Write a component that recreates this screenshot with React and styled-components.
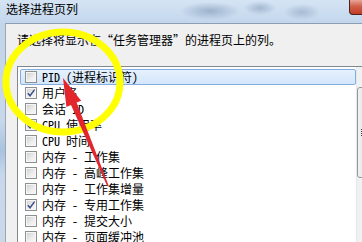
import styled, { createGlobalStyle } from "styled-components";

const GlobalStyle = createGlobalStyle`
    html, body {
        margin: 0;
        padding: 0;
        overflow: hidden;
        background: #f0f0f0;
    }
    body {
        font-family: "Noto Sans Mono CJK SC", "Noto Sans CJK SC", sans-serif;
        font-size: 12px;
    }
`

const columns = [
    { label: "PID (进程标识符)", selected: true },
    { label: "用户名", checked: true },
    { label: "会话 ID" },
    { label: "CPU 使用率", checked: true },
    { label: "CPU 时间" },
    { label: "内存 - 工作集" },
    { label: "内存 - 高峰工作集" },
    { label: "内存 - 工作集增量" },
    { label: "内存 - 专用工作集", checked: true },
    { label: "内存 - 提交大小" },
    { label: "内存 - 页面缓冲池" },
]

function App() {
    return (
        <>
            <GlobalStyle />
            <Screen>
                <TitleBar>
                    <Title>选择进程页列</Title>
                    <CloseButton>
                        <svg width="10" height="9" viewBox="0 0 10 9">
                            <path d="M1 0.5 L9 8.5 M9 0.5 L1 8.5" stroke="#fff" strokeWidth="2.2" />
                        </svg>
                    </CloseButton>
                </TitleBar>
                <Frame>
                    <Client>
                        <Intro>请选择将显示在“任务管理器”的进程页上的列。</Intro>
                        <ListBox>
                            <List>
                                {columns.map(col => (
                                    <Row key={col.label} selected={col.selected}>
                                        <CheckBox>
                                            {col.checked &&
                                                <svg width="10" height="10" viewBox="0 0 10 10">
                                                    <path d="M1.8 5.2 L4 7.8 L8.6 1.6" fill="none" stroke="#3b4f8c" strokeWidth="1.5" />
                                                </svg>}
                                        </CheckBox>
                                        <Label>{col.label}</Label>
                                    </Row>
                                ))}
                            </List>
                            <ScrollBar>
                                <Thumb><Grip /></Thumb>
                            </ScrollBar>
                        </ListBox>
                    </Client>
                </Frame>
                <Markup width="362" height="242" viewBox="0 0 362 242">
                    <ellipse cx="63" cy="82" rx="57" ry="50" fill="none" stroke="#ffff00" strokeWidth="7" />
                    <polygon fill="#e3262b"
                        points="63,78 81.2,100.7 76.6,102.6 108.7,185.7 107.3,186.3 71,105 66.4,106.9" />
                </Markup>
            </Screen>
        </>
    )
}

const Screen = styled.div`
    position: relative;
    width: 362px;
    height: 242px;
    overflow: hidden;
    display: flex;
    flex-direction: column;
`
const TitleBar = styled.div`
    height: 23px;
    flex-shrink: 0;
    display: flex;
    align-items: flex-start;
    background:
        radial-gradient(ellipse 30px 9px at 210px 11px, rgba(110, 135, 168, 0.5), transparent),
        radial-gradient(ellipse 16px 7px at 260px 8px, rgba(110, 135, 168, 0.45), transparent),
        radial-gradient(ellipse 18px 8px at 302px 12px, rgba(110, 135, 168, 0.4), transparent),
        linear-gradient(#d5e4f4, #c2d6ec);
`
const Title = styled.div`
    font-family: "Noto Sans CJK SC", sans-serif;
    font-size: 12px;
    line-height: 14px;
    color: #000;
    padding: 2px 0 0 6px;
`
const CloseButton = styled.div`
    margin-left: auto;
    margin-right: -32px;
    width: 45px;
    height: 15px;
    box-sizing: border-box;
    border: 1px solid #4a211b;
    border-top: none;
    border-radius: 0 0 4px 4px;
    background: linear-gradient(#e8a597, #d0604b 45%, #c23b26);
    display: flex;
    justify-content: center;
    padding-top: 1px;
`
const Frame = styled.div`
    flex: 1;
    display: flex;
    padding-left: 5px;
    background: linear-gradient(#c4d5e8, #c8d8ea 40%, #a9c2de 52%, #c8d8ea 62%, #cbd9e8);
`
const Client = styled.div`
    flex: 1;
    background: #f0f0f0;
    border-top: 1px solid #8e9db2;
    border-left: 1px solid #9aa6b8;
    padding: 9px 0 0 11px;
`
const Intro = styled.div`
    line-height: 14px;
    height: 14px;
    color: #000;
    white-space: nowrap;
`
const ListBox = styled.div`
    margin-top: 19px;
    width: 380px;
    height: 200px;
    border: 1px solid #828790;
    background: #fff;
    display: flex;
`
const List = styled.div`
    width: 338px;
    padding: 2px 0 0 2px;
    box-sizing: border-box;
`
const Row = styled.div`
    height: 16px;
    box-sizing: border-box;
    display: flex;
    align-items: center;
    padding-left: 4px;
    border: 1px solid ${props => props.selected ? "#84acdd" : "transparent"};
    border-radius: 2px;
    background: ${props => props.selected ? "linear-gradient(#e6f1fd, #d3e6fc)" : "transparent"};
`
const CheckBox = styled.div`
    width: 12px;
    height: 12px;
    box-sizing: border-box;
    border: 1px solid #8e8f8f;
    background: linear-gradient(135deg, #cdcdcd, #eeeeee 60%, #f8f8f8);
    box-shadow: inset 0 0 0 1px #f6f6f6;
    display: flex;
    align-items: center;
    justify-content: center;
`
const Label = styled.span`
    margin-left: 5px;
    line-height: 14px;
    color: #000;
    white-space: nowrap;
`
const ScrollBar = styled.div`
    width: 17px;
    background: linear-gradient(to right, #e3e7ee 1px, #f0f0f0 1px, #f4f4f4);
    padding-top: 20px;
`
const Thumb = styled.div`
    margin-left: 1px;
    width: 15px;
    height: 91px;
    box-sizing: border-box;
    border: 1px solid #979797;
    border-radius: 3px;
    background: linear-gradient(to right, #f2f2f2, #e2e2e2 50%, #d6d6d6);
    display: flex;
    align-items: center;
    justify-content: center;
`
const Grip = styled.div`
    width: 7px;
    height: 7px;
    background: repeating-linear-gradient(#444 0 1px, transparent 1px 2px);
`
const Markup = styled.svg`
    position: absolute;
    top: 0;
    left: 0;
    pointer-events: none;
`

export default App;
